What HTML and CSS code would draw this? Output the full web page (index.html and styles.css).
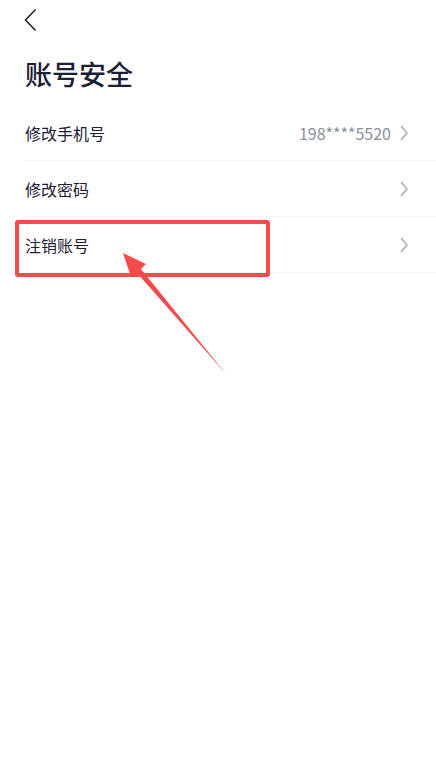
FILE: index.html
```html
<!DOCTYPE html>
<html lang="zh-CN">
<head>
  <meta charset="UTF-8">
  <title>账号安全</title>
  <link rel="stylesheet" href="styles.css">
</head>
<body>
  <div class="page">
    <div class="nav">
      <svg class="back" width="14" height="24" viewBox="0 0 14 24">
        <polyline points="11.5,1.5 1.5,12 11.5,22.5" fill="none" stroke="#23252e" stroke-width="1.6"/>
      </svg>
    </div>

    <h1 class="title">账号安全</h1>

    <ul class="list">
      <li class="row">
        <span class="label">修改手机号</span>
        <span class="value">198****5520</span>
        <svg class="arrow" width="8" height="16" viewBox="0 0 8 16">
          <polyline points="1,1 7,8 1,15" fill="none" stroke="#a3a8b3" stroke-width="1.4"/>
        </svg>
      </li>
      <li class="row">
        <span class="label">修改密码</span>
        <svg class="arrow" width="8" height="16" viewBox="0 0 8 16">
          <polyline points="1,1 7,8 1,15" fill="none" stroke="#a3a8b3" stroke-width="1.4"/>
        </svg>
      </li>
      <li class="row">
        <span class="label">注销账号</span>
        <svg class="arrow" width="8" height="16" viewBox="0 0 8 16">
          <polyline points="1,1 7,8 1,15" fill="none" stroke="#a3a8b3" stroke-width="1.4"/>
        </svg>
      </li>
    </ul>

    <!-- annotation over the screenshot -->
    <div class="highlight"></div>
    <svg class="pointer" width="436" height="778" viewBox="0 0 436 778">
      <polygon points="123,253 146,264 141,269 226,374 137,273 131,277" fill="#f44c4c"/>
    </svg>
  </div>
</body>
</html>
```

FILE: styles.css
```css
* {
  box-sizing: border-box;
}
body {
  margin: 0;
  background: #ffffff;
  font-family: "Noto Sans CJK SC", "Noto Sans", sans-serif;
  color: #1c2033;
}
.page {
  position: relative;
  min-height: 778px;
  padding-left: 25px;
}
.nav {
  height: 40px;
  display: flex;
  align-items: center;
}
.back {
  display: block;
  margin-left: -1px;
}
.title {
  margin: 15px 0 12px;
  font-size: 27px;
  line-height: 38px;
  font-weight: 500;
}
.list {
  list-style: none;
  margin: 0;
  padding: 0;
}
.row {
  height: 56px;
  display: flex;
  align-items: center;
  padding-right: 28px;
  border-bottom: 1px solid #f2f3f5;
  font-size: 16px;
}
.label {
  flex: 1;
}
.value {
  color: #8a909c;
  margin-right: 9px;
}
.arrow {
  display: block;
}

/* Annotation */
.highlight {
  position: absolute;
  left: 15px;
  top: 220px;
  width: 255px;
  height: 57px;
  border: 4px solid #f44c4c;
  border-radius: 3px;
}
.pointer {
  position: absolute;
  left: 0;
  top: 0;
}
```
